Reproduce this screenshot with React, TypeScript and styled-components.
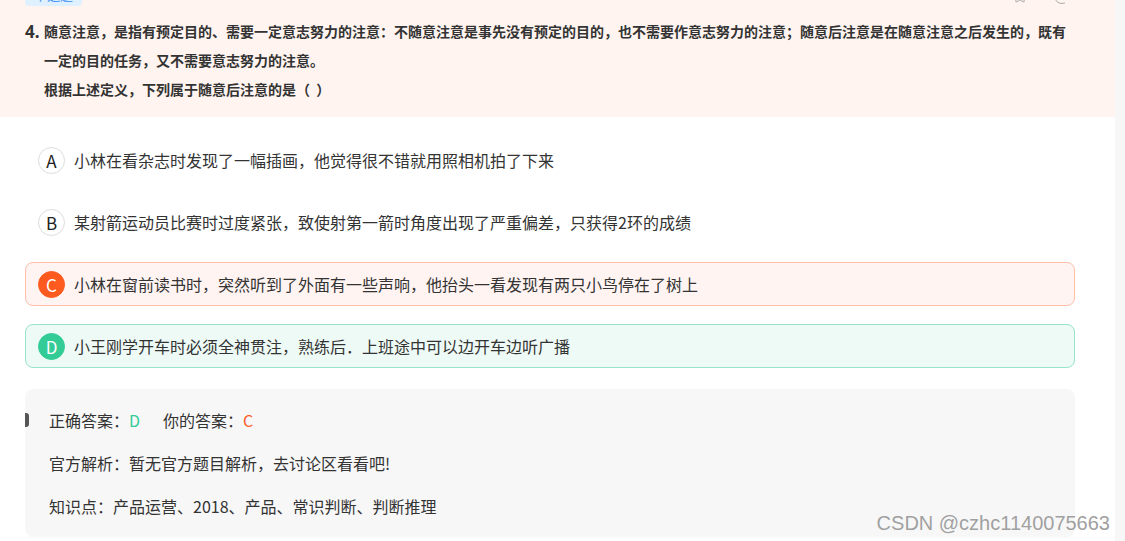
import styled, { createGlobalStyle } from "styled-components";
import { Star } from "lucide-react";

const GlobalStyle = createGlobalStyle`
  html, body {
    margin: 0;
    padding: 0;
    background: #f7f7f7;
    overflow: hidden;
  }
  body {
    font-family: "Noto Sans CJK SC", "Noto Sans", sans-serif;
    color: #333;
  }
`;

type Status = "normal" | "wrong" | "right";

interface OptionItem {
  key: string;
  text: string;
  status: Status;
}

const options: OptionItem[] = [
  { key: "A", text: "小林在看杂志时发现了一幅插画，他觉得很不错就用照相机拍了下来", status: "normal" },
  { key: "B", text: "某射箭运动员比赛时过度紧张，致使射第一箭时角度出现了严重偏差，只获得2环的成绩", status: "normal" },
  { key: "C", text: "小林在窗前读书时，突然听到了外面有一些声响，他抬头一看发现有两只小鸟停在了树上", status: "wrong" },
  { key: "D", text: "小王刚学开车时必须全神贯注，熟练后．上班途中可以边开车边听广播", status: "right" },
];

const palette = {
  normal: { border: "transparent", bg: "transparent", circle: "#fff", circleBorder: "#dcdcdc", letter: "#222" },
  wrong: { border: "#ffbfa9", bg: "#fff4f1", circle: "#fd5a1f", circleBorder: "#fd5a1f", letter: "#fff" },
  right: { border: "#98e4c7", bg: "#eefaf6", circle: "#33cc97", circleBorder: "#33cc97", letter: "#fff" },
};

export default function App() {
  return (
    <Page>
      <GlobalStyle />
      <Panel>
        <Header>
          <TopRow>
            <Tag>单选题</Tag>
            <Tools>
              <Star size={16} strokeWidth={1.5} />
              <CircleIcon />
            </Tools>
          </TopRow>
          <Question>
            <Num>4.</Num>
            <Stem>
              <StemLine $justify>
                随意注意，是指有预定目的、需要一定意志努力的注意：不随意注意是事先没有预定的目的，也不需要作意志努力的注意；随意后注意是在随意注意之后发生的，既有
              </StemLine>
              <StemLine>一定的目的任务，又不需要意志努力的注意。</StemLine>
              <StemLine>根据上述定义，下列属于随意后注意的是（&nbsp;&nbsp;）</StemLine>
            </Stem>
          </Question>
        </Header>

        <Body>
          <OptionList>
            {options.map((o) => (
              <Option key={o.key} $status={o.status}>
                <Letter $status={o.status}>{o.key}</Letter>
                <OptionText>{o.text}</OptionText>
              </Option>
            ))}
          </OptionList>

          <Analysis>
            <Marker />
            <AnalysisLine>
              正确答案：<Answer $color="#33cc97">D</Answer>
              你的答案：<Answer $color="#fd5a1f">C</Answer>
            </AnalysisLine>
            <AnalysisLine>官方解析：暂无官方题目解析，去讨论区看看吧!</AnalysisLine>
            <AnalysisLine>知识点：产品运营、2018、产品、常识判断、判断推理</AnalysisLine>
          </Analysis>
        </Body>
      </Panel>
      <Watermark>CSDN @czhc1140075663</Watermark>
    </Page>
  );
}

const Page = styled.div`
  position: relative;
  display: flex;
  width: 1125px;
  height: 541px;
  overflow: hidden;
  background: #f7f7f7;
`;

const Panel = styled.div`
  width: 1115px;
  background: #fff;
  display: flex;
  flex-direction: column;
`;

const Header = styled.div`
  background: #fff4f0;
  padding: 0 50px 13px 25px;
  height: 117px;
  box-sizing: border-box;
`;

const TopRow = styled.div`
  display: flex;
  justify-content: space-between;
  align-items: flex-end;
  height: 7px;
  overflow: hidden;
`;

const Tag = styled.div`
  width: 57px;
  height: 22px;
  margin-bottom: 1px;
  border-radius: 4px;
  background: #dff0ff;
  color: #3a8ff0;
  font-size: 13px;
  line-height: 22px;
  text-align: center;
  flex-shrink: 0;
`;

const Tools = styled.div`
  display: flex;
  align-items: flex-end;
  gap: 26px;
  color: #aaa;
  margin-bottom: 3px;
  margin-right: -5px;
`;

const CircleIcon = styled.div`
  width: 14px;
  height: 14px;
  border: 1.5px solid #aaa;
  border-radius: 50%;
`;

const Question = styled.div`
  display: flex;
  align-items: flex-start;
  margin-top: 10px;
`;

const Num = styled.div`
  width: 19px;
  flex-shrink: 0;
  font-size: 17px;
  font-weight: 700;
  line-height: 29px;
  color: #333;
  font-family: "Noto Sans", "Noto Sans CJK SC", sans-serif;
`;

const Stem = styled.div`
  flex: 1;
`;

const StemLine = styled.div<{ $justify?: boolean }>`
  font-size: 14px;
  font-weight: 700;
  line-height: 29px;
  color: #333;
  white-space: nowrap;
  text-align: ${(p) => (p.$justify ? "justify" : "left")};
  text-align-last: ${(p) => (p.$justify ? "justify" : "auto")};
`;

const Body = styled.div`
  padding: 21px 40px 0 25px;
  display: flex;
  flex-direction: column;
`;

const OptionList = styled.div`
  display: flex;
  flex-direction: column;
  gap: 18px;
`;

const Option = styled.div<{ $status: Status }>`
  display: flex;
  align-items: center;
  gap: 9px;
  height: 44px;
  box-sizing: border-box;
  padding: 0 12px;
  border: 1px solid ${(p) => palette[p.$status].border};
  background: ${(p) => palette[p.$status].bg};
  border-radius: 8px;
`;

const Letter = styled.div<{ $status: Status }>`
  width: 27px;
  height: 27px;
  box-sizing: border-box;
  border-radius: 50%;
  border: 1px solid ${(p) => palette[p.$status].circleBorder};
  background: ${(p) => palette[p.$status].circle};
  color: ${(p) => palette[p.$status].letter};
  display: flex;
  align-items: center;
  justify-content: center;
  font-size: 17px;
  flex-shrink: 0;
`;

const OptionText = styled.div`
  font-size: 16px;
  color: #333;
`;

const Analysis = styled.div`
  position: relative;
  margin-top: 21px;
  padding: 10px 24px 9px;
  background: #f7f7f7;
  border-radius: 8px;
`;

const Marker = styled.div`
  position: absolute;
  left: 0;
  top: 24px;
  width: 4px;
  height: 14px;
  background: #555;
  border-radius: 0 3px 3px 0;
`;

const AnalysisLine = styled.div`
  font-size: 16px;
  line-height: 43px;
  color: #333;
`;

const Answer = styled.span<{ $color: string }>`
  color: ${(p) => p.$color};
  margin-right: 23px;
`;

const Watermark = styled.div`
  position: absolute;
  right: 15px;
  bottom: 6px;
  font-family: "Liberation Sans", Arial, sans-serif;
  font-size: 20px;
  color: #a0a0a0;
  text-shadow: 0 0 1px #fff;
`;
